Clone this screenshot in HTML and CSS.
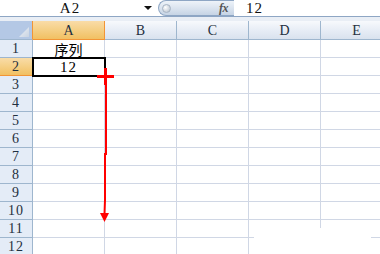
FILE: index.html
```html
<!DOCTYPE html>
<html>
<head>
<meta charset="utf-8">
<link rel="stylesheet" href="styles.css">
</head>
<body>
<div class="app">
  <div class="fbar">
    <div class="namebox"><span class="ref">A2</span><span class="dd"></span></div>
    <div class="pill"><span class="knob"></span><span class="fx">fx</span></div>
    <div class="finput">12</div>
  </div>
  <div class="band"></div>
  <div class="sheet">
    <div class="corner"><svg width="10" height="10" viewBox="0 0 10 10"><defs><linearGradient id="tg" x1="0" y1="0" x2="1" y2="1"><stop offset="0" stop-color="#eef2f7"/><stop offset="1" stop-color="#c9d4e2"/></linearGradient></defs><polygon points="10,0 10,10 0,10" fill="url(#tg)"/></svg></div>
    <div class="ch ch-sel">A</div><div class="ch">B</div><div class="ch">C</div><div class="ch">D</div><div class="ch">E</div>

    <div class="rh">1</div><div class="c c-text">序列</div><div class="c"></div><div class="c"></div><div class="c"></div><div class="c"></div>
    <div class="rh rh-sel">2</div><div class="c c-num c-active">12</div><div class="c"></div><div class="c"></div><div class="c"></div><div class="c"></div>
    <div class="rh">3</div><div class="c"></div><div class="c"></div><div class="c"></div><div class="c"></div><div class="c"></div>
    <div class="rh">4</div><div class="c"></div><div class="c"></div><div class="c"></div><div class="c"></div><div class="c"></div>
    <div class="rh">5</div><div class="c"></div><div class="c"></div><div class="c"></div><div class="c"></div><div class="c"></div>
    <div class="rh">6</div><div class="c"></div><div class="c"></div><div class="c"></div><div class="c"></div><div class="c"></div>
    <div class="rh">7</div><div class="c"></div><div class="c"></div><div class="c"></div><div class="c"></div><div class="c"></div>
    <div class="rh">8</div><div class="c"></div><div class="c"></div><div class="c"></div><div class="c"></div><div class="c"></div>
    <div class="rh">9</div><div class="c"></div><div class="c"></div><div class="c"></div><div class="c"></div><div class="c"></div>
    <div class="rh">10</div><div class="c"></div><div class="c"></div><div class="c"></div><div class="c"></div><div class="c"></div>
    <div class="rh">11</div><div class="c"></div><div class="c"></div><div class="c"></div><div class="c"></div><div class="c"></div>
    <div class="rh">12</div><div class="c"></div><div class="c"></div><div class="c"></div><div class="c"></div><div class="c"></div>
  </div>
  <div class="erase"></div>
  <svg class="annot" width="380" height="254" viewBox="0 0 380 254">
    <polyline points="106,85 106,154 105,154 105,200 104.5,214" fill="none" stroke="#ff0000" stroke-width="2"/>
    <rect x="97" y="75" width="17" height="3" fill="#ff0000"/>
    <rect x="104" y="68" width="3" height="17" fill="#ff0000"/>
    <polygon points="100,213 109,213 104.5,222" fill="#ff0000"/>
  </svg>
</div>
</body>
</html>
```

FILE: styles.css
```css
* { box-sizing: border-box; }
html, body { margin: 0; padding: 0; background: #fff; }
.app {
  position: relative;
  width: 380px;
  height: 254px;
  overflow: hidden;
  font-family: "Liberation Serif", "DejaVu Serif", serif;
  color: #1f3040;
}
.fbar {
  display: flex;
  height: 17px;
  border-bottom: 1px solid #8ea6c4;
  background: #fff;
}
.namebox {
  width: 158px;
  display: flex;
  align-items: center;
  position: relative;
}
.ref {
  width: 140px;
  text-align: center;
  font-size: 15px;
  line-height: 16px;
  color: #111;
  letter-spacing: 1px;
}
.dd {
  margin-left: 4px;
  width: 0;
  height: 0;
  border-left: 4px solid transparent;
  border-right: 4px solid transparent;
  border-top: 4px solid #111;
}
.pill {
  width: 76px;
  height: 16px;
  border: 1px solid #8ea6c4;
  border-right: none;
  border-radius: 8px 0 0 8px;
  background: linear-gradient(#eef3f9, #dbe4ef 50%, #c6d4e5);
  display: flex;
  align-items: center;
  padding-left: 3px;
}
.knob {
  width: 9px;
  height: 9px;
  border-radius: 50%;
  background: radial-gradient(circle at 35% 35%, #ffffff, #c8d0da 70%, #9aa8b8);
  border: 1px solid #a7b4c4;
}
.fx {
  margin-left: auto;
  margin-right: 6px;
  font-family: "Liberation Serif", serif;
  font-style: italic;
  font-weight: bold;
  font-size: 12px;
  color: #555;
  letter-spacing: -0.5px;
}
.finput {
  flex: 1;
  padding-left: 12px;
  font-size: 15px;
  line-height: 16px;
  color: #111;
  letter-spacing: 1px;
}
.band {
  height: 4px;
  background: #e9eef5;
}
.sheet {
  display: grid;
  grid-template-columns: 33px repeat(5, 72px);
  grid-template-rows: 19px repeat(12, 18px);
  width: 393px;
}
.corner {
  background: #b4c8e5;
  border-right: 1px solid #f29536;
  border-bottom: 1px solid #9eb6ce;
  display: flex;
  align-items: flex-end;
  justify-content: flex-end;
  padding: 0 3px 2px 0;
}
.corner svg { display: block; }
.ch {
  background: linear-gradient(#f7f9fc, #e6ecf5 55%, #d9e2ee);
  border-right: 1px solid #9eb6ce;
  border-bottom: 1px solid #9eb6ce;
  display: flex;
  align-items: center;
  justify-content: center;
  font-size: 14px;
  padding-top: 1px;
}
.ch-sel {
  background: linear-gradient(#f9dca8, #f5cf85 50%, #f1c062);
  border-right-color: #f29536;
  border-bottom-color: #f29536;
}
.rh {
  background: #e4ecf7;
  border-right: 1px solid #9eb6ce;
  border-bottom: 1px solid #9eb6ce;
  display: flex;
  align-items: center;
  justify-content: center;
  font-size: 14px;
  padding-top: 1px;
  letter-spacing: 1px;
}
.rh-sel {
  background: linear-gradient(#f9dca8, #f5cf85 50%, #f1c062);
  border-right-color: #f29536;
  border-bottom-color: #f29536;
}
.c {
  border-right: 1px solid #d0d7e5;
  border-bottom: 1px solid #d0d7e5;
  color: #000;
}
.c-text {
  display: flex;
  align-items: flex-end;
  justify-content: center;
  font-family: "Noto Sans CJK SC", sans-serif;
  font-size: 14px;
  line-height: 16px;
}
.c-num {
  display: flex;
  align-items: center;
  justify-content: center;
  font-size: 15px;
  padding-top: 1px;
  letter-spacing: 1px;
}
.c-active {
  outline: 2px solid #000;
  outline-offset: -1px;
  position: relative;
  z-index: 1;
}
.erase {
  position: absolute;
  left: 254px;
  top: 228px;
  width: 117px;
  height: 26px;
  background: #fff;
}
.annot {
  position: absolute;
  left: 0;
  top: 0;
  z-index: 2;
  pointer-events: none;
}
```
